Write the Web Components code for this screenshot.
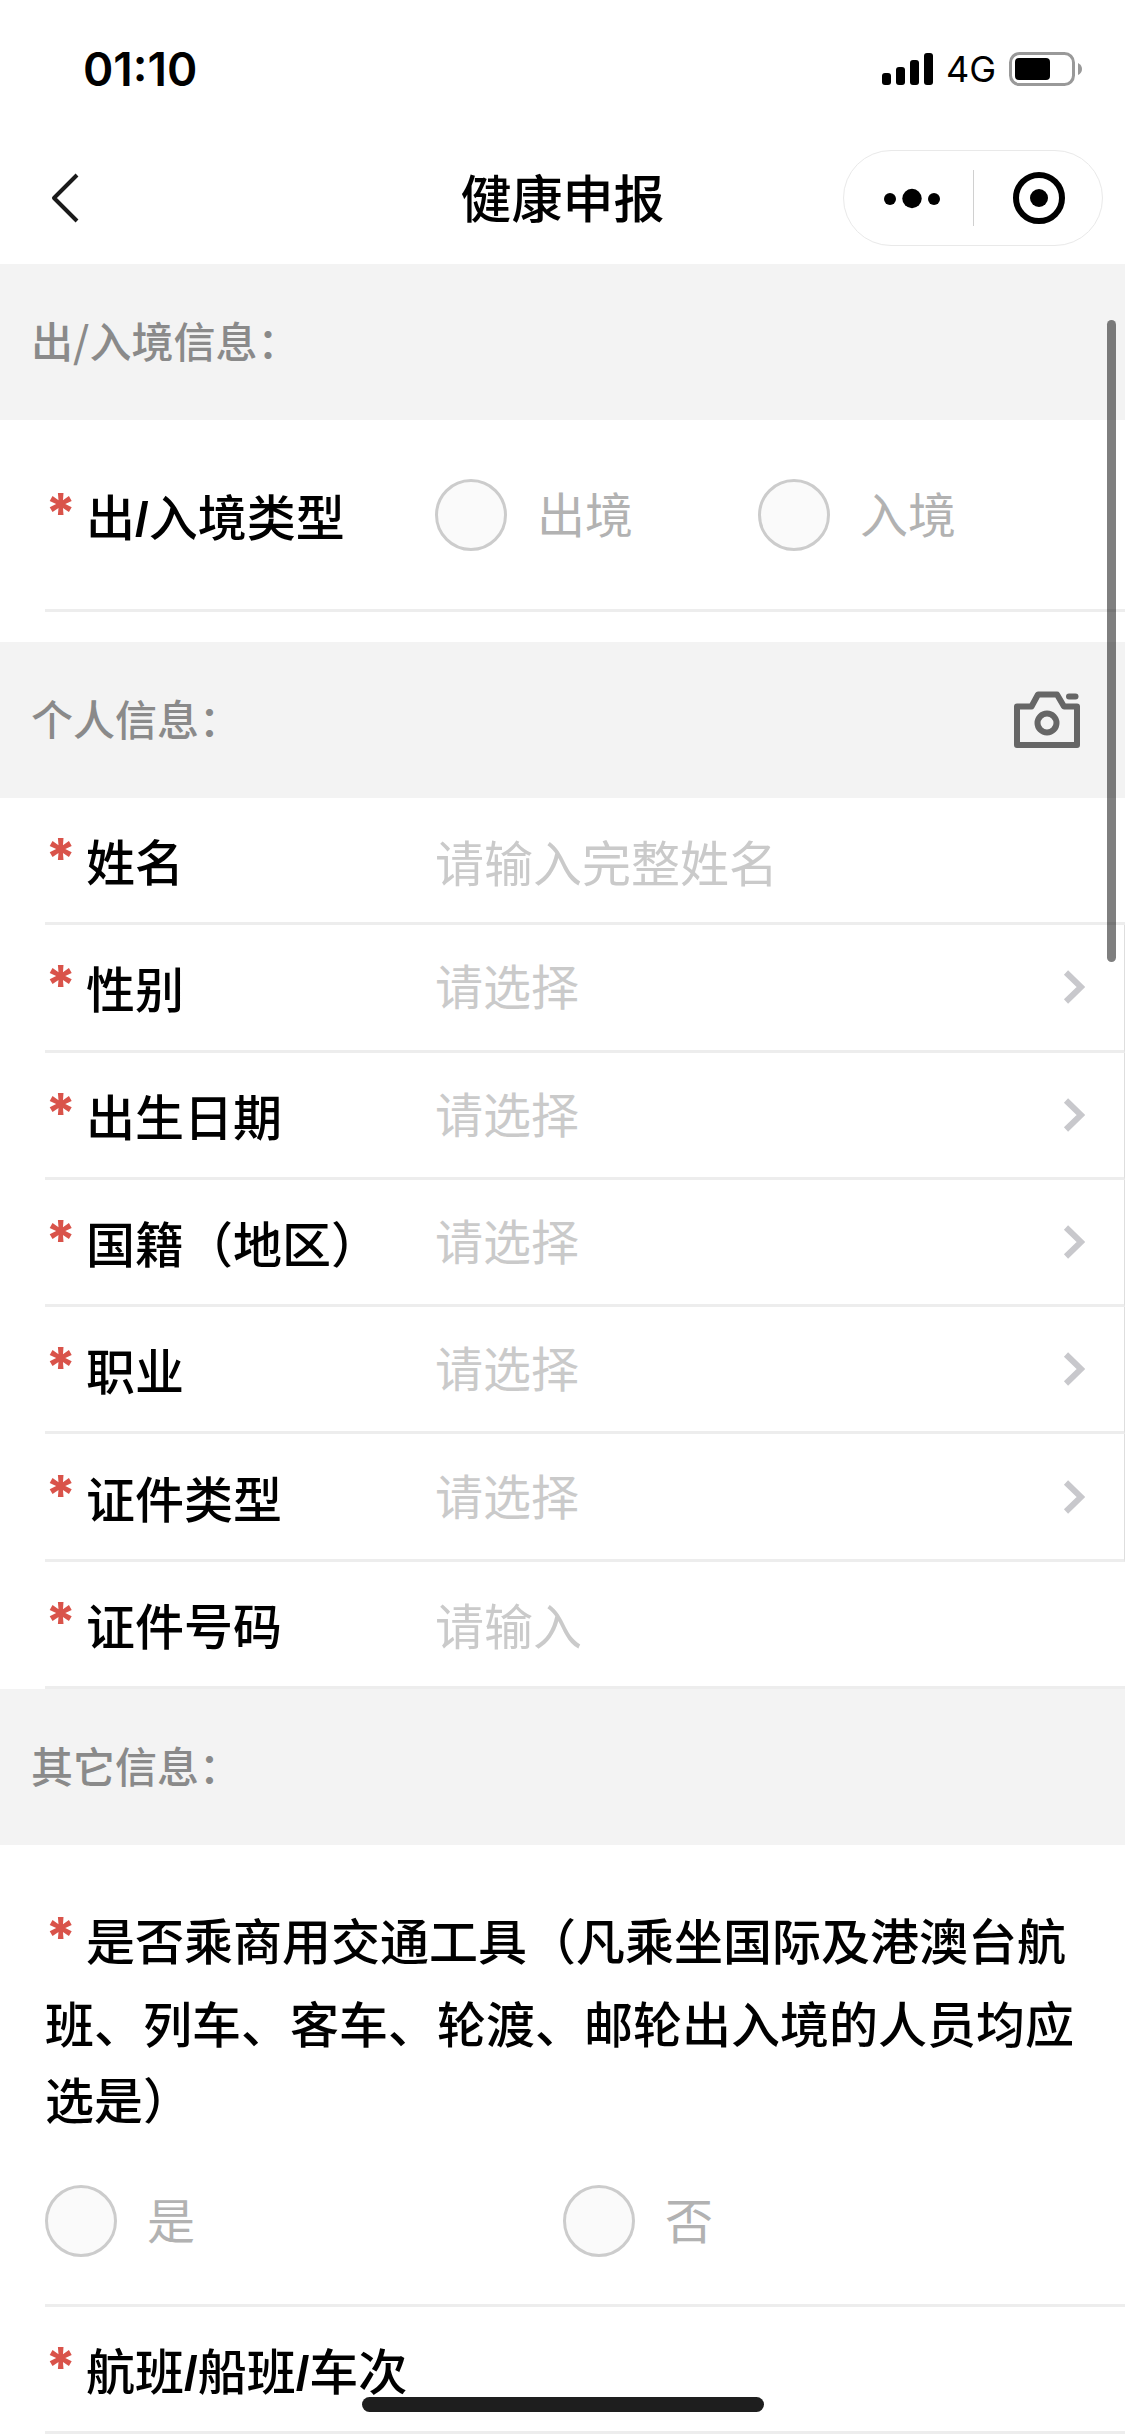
<!DOCTYPE html>
<html lang="zh-CN">
<head>
<meta charset="utf-8">
<meta name="viewport" content="width=device-width, initial-scale=1">
<title>健康申报</title>
<style>
  html, body { margin: 0; background: #fff; }
  body { font-family: "Noto Sans CJK SC", sans-serif; color: #000; overflow-x: hidden; }
  b { font-family: "Liberation Sans", sans-serif; font-weight: 700; line-height: 0; }
</style>
</head>
<body>
<health-page>
  <status-bar slot="header" time="01:10" network="4G"></status-bar>
  <nav-bar slot="header">健康申报</nav-bar>

  <section-title>出/入境信息：</section-title>
  <form-group class="spaced">
    <radio-row options="出境,入境">出<b>/</b>入境类型</radio-row>
  </form-group>

  <section-title camera>个人信息：</section-title>
  <form-group class="fields">
    <input-row placeholder="请输入完整姓名">姓名</input-row>
    <select-row>性别</select-row>
    <select-row>出生日期</select-row>
    <select-row>国籍（地区）</select-row>
    <select-row>职业</select-row>
    <select-row>证件类型</select-row>
    <input-row placeholder="请输入">证件号码</input-row>
  </form-group>

  <section-title>其它信息：</section-title>
  <form-group>
    <radio-row stacked options="是,否">是否乘商用交通工具（凡乘坐国际及港澳台航班、列车、客车、轮渡、邮轮出入境的人员均应选是）</radio-row>
    <input-row>航班<b>/</b>船班<b>/</b>车次</input-row>
  </form-group>
</health-page>

<script>
  const define = (name, render) => customElements.define(name, class extends HTMLElement {
    connectedCallback() {
      if (this.shadowRoot) return;
      this.attachShadow({ mode: 'open' }).innerHTML = render(this);
    }
  });

  const rowStyle = `
    :host { display: block; padding-left: 45px; box-sizing: border-box; font-size: 49px; }
    .row { display: flex; align-items: center; height: 100%; min-height: 127px; box-sizing: border-box; border-bottom: 3px solid #ededed; }
    .name { width: 390px; flex: none; font-weight: 500; line-height: 76px; white-space: nowrap; }
    .star { display: inline-block; width: 41px; height: 76px; vertical-align: top; color: #d9534a;
            font: 800 54px/72px Inter, sans-serif; }
    input, select { font: inherit; font-weight: 400; appearance: none; border: 0; border-radius: 0; background: none;
            outline: 0; padding: 0; margin: 0; flex: 1; min-width: 0; height: 76px; }
    .radio { display: flex; align-items: center; gap: 30px; flex: 1; font-size: 48px; color: #b2b2b2; }
    .radio input { flex: none; width: 72px; height: 72px; box-sizing: border-box; border: 3px solid #cccccc;
            border-radius: 50%; background: #fafafa; }
    .radio input:checked { background: radial-gradient(#1aad19 45%, #fafafa 48%); }
    .radio label { line-height: 66px; padding-bottom: 6px; }
  `;

  define('health-page', () => `
    <style>
      :host { display: block; position: relative; }
      .scroll { position: absolute; top: 320px; right: 9px; width: 9px; height: 642px; border-radius: 5px; background: rgba(0,0,0,.5); }
      .home { position: fixed; bottom: 24px; left: 50%; margin-left: -201px; width: 402px; height: 15px; border-radius: 8px; background: #1e1e1e; }
    </style>
    <header><slot name="header"></slot></header>
    <main><slot></slot></main>
    <div class="scroll"></div>
    <div class="home"></div>`);

  define('status-bar', el => `
    <style>
      :host { display: flex; align-items: center; justify-content: space-between; height: 138px; padding: 0 42px 0 83px; font-family: Inter, sans-serif; }
      time { font-size: 46px; font-weight: 600; }
      .right { display: flex; align-items: center; gap: 13px; font-size: 36px; }
      svg { display: block; }
    </style>
    <time>${el.getAttribute('time')}</time>
    <div class="right">
      <svg width="51" height="34" viewBox="0 0 51 34"><rect y="21" width="9" height="12" rx="3"/><rect x="14" y="15" width="9" height="18" rx="3"/><rect x="28" y="8" width="9" height="25" rx="3"/><rect x="42" y="1" width="9" height="32" rx="3"/></svg>
      <span>${el.getAttribute('network')}</span>
      <svg width="74" height="34" viewBox="0 0 74 34"><rect x="1.5" y="1.5" width="63" height="31" rx="9" fill="none" stroke="#999" stroke-width="3"/><rect x="6" y="6" width="35" height="22" rx="4"/><path d="M69 11q4 2 4 6t-4 6z" fill="#999"/></svg>
    </div>`);

  define('nav-bar', () => `
    <style>
      :host { display: grid; grid-template-columns: 1fr auto 1fr; align-items: center; height: 126px; padding: 0 22px 6px; box-sizing: border-box; }
      h1 { margin: 0; padding-bottom: 4px; font-size: 51px; font-weight: 500; line-height: 76px; }
      button { appearance: none; border: 0; background: none; padding: 0; display: flex; align-items: center; justify-content: center; }
      .back { width: 86px; height: 76px; }
      .capsule { justify-self: end; display: grid; grid-template-columns: 1fr 1px 1fr; align-items: center; width: 260px; height: 96px; box-sizing: border-box; border: 1px solid #e9e9e9; border-radius: 48px; }
      .capsule button { height: 94px; }
      .capsule button:first-child { padding-left: 8px; }
      .capsule button:last-child { padding-left: 2px; }
      .capsule i { height: 56px; background: #d0d0d0; }
    </style>
    <button class="back" aria-label="返回"><svg width="48" height="50" viewBox="0 0 48 50"><path d="M36 2L13 25L36 48" fill="none" stroke="#1a1a1a" stroke-width="4" stroke-linejoin="round"/></svg></button>
    <h1><slot></slot></h1>
    <div class="capsule">
      <button aria-label="更多"><svg width="58" height="24" viewBox="0 0 58 24"><circle cx="7" cy="13" r="6"/><circle cx="29" cy="12.5" r="9.7"/><circle cx="51" cy="13" r="6"/></svg></button>
      <i></i>
      <button aria-label="关闭"><svg width="52" height="52" viewBox="0 0 52 52"><circle cx="26" cy="26" r="23" fill="none" stroke="#000" stroke-width="6"/><circle cx="26" cy="26" r="9"/></svg></button>
    </div>`);

  define('section-title', el => `
    <style>
      :host { display: flex; align-items: center; justify-content: space-between; height: 156px; padding: 0 45px 0 31px; box-sizing: border-box; background: #f3f3f3; }
      h2 { margin: 0; padding-bottom: 4px; font-size: 42px; font-weight: 500; line-height: 64px; color: #8a8a8a; }
      button { appearance: none; border: 0; background: none; padding: 0; }
      svg { display: block; }
    </style>
    <h2><slot></slot></h2>
    ${el.hasAttribute('camera') ? `<button aria-label="拍照"><svg width="66" height="58" viewBox="0 0 66 58" fill="none" stroke="#666" stroke-width="6" stroke-linejoin="round"><path d="M3 15.500H17.500L24 3.500H43L50 15.500H63V54H3Z"/><circle cx="33" cy="32" r="9.500"/><path d="M55 5.500H61.500" stroke-linecap="round"/></svg></button>` : ''}`);

  define('form-group', () => `
    <style>
      :host { display: grid; grid-template-columns: 100%; }
      :host(.fields) { grid-auto-rows: 1fr; min-height: 891px; }
      :host(.spaced) { padding-bottom: 30px; }
    </style>
    <slot></slot>`);

  define('input-row', el => `
    <style>${rowStyle}
      input::placeholder { color: #cacaca; opacity: 1; }
    </style>
    <div class="row">
      <label class="name" for="field"><span class="star">*</span><slot></slot></label>
      <input id="field" type="text" placeholder="${el.getAttribute('placeholder') || ''}">
    </div>`);

  define('select-row', () => `
    <style>${rowStyle}
      .row { border-right: 1px solid #dedede; padding-right: 39px; }
      select { font-size: 48px; color: #cacaca; padding-bottom: 8px; }
    </style>
    <div class="row">
      <label class="name" for="field"><span class="star">*</span><slot></slot></label>
      <select id="field"><option>请选择</option></select>
      <svg width="22" height="34" viewBox="0 0 22 34"><path d="M3 2.500L18 17L3 31.500" fill="none" stroke="#c8c8cc" stroke-width="6"/></svg>
    </div>`);

  define('radio-row', el => `
    <style>${rowStyle}
      .row { padding: 57px 0 56px; }
      .choices { display: flex; flex: 1; padding-right: 44px; }
      :host([stacked]) .row { display: block; padding: 56px 0 47px; }
      :host([stacked]) .name { width: auto; padding-right: 45px; white-space: normal; }
      :host([stacked]) .star { height: 83px; }
      :host([stacked]) .choices { padding-top: 49px; }
    </style>
    <div class="row">
      <div class="name" id="name"><span class="star">*</span><slot></slot></div>
      <div class="choices" role="radiogroup" aria-labelledby="name">
        ${el.getAttribute('options').split(',').map((o, i) => `<div class="radio"><input type="radio" name="choice" id="c${i}"><label for="c${i}">${o}</label></div>`).join('')}
      </div>
    </div>`);
</script>
</body>
</html>
